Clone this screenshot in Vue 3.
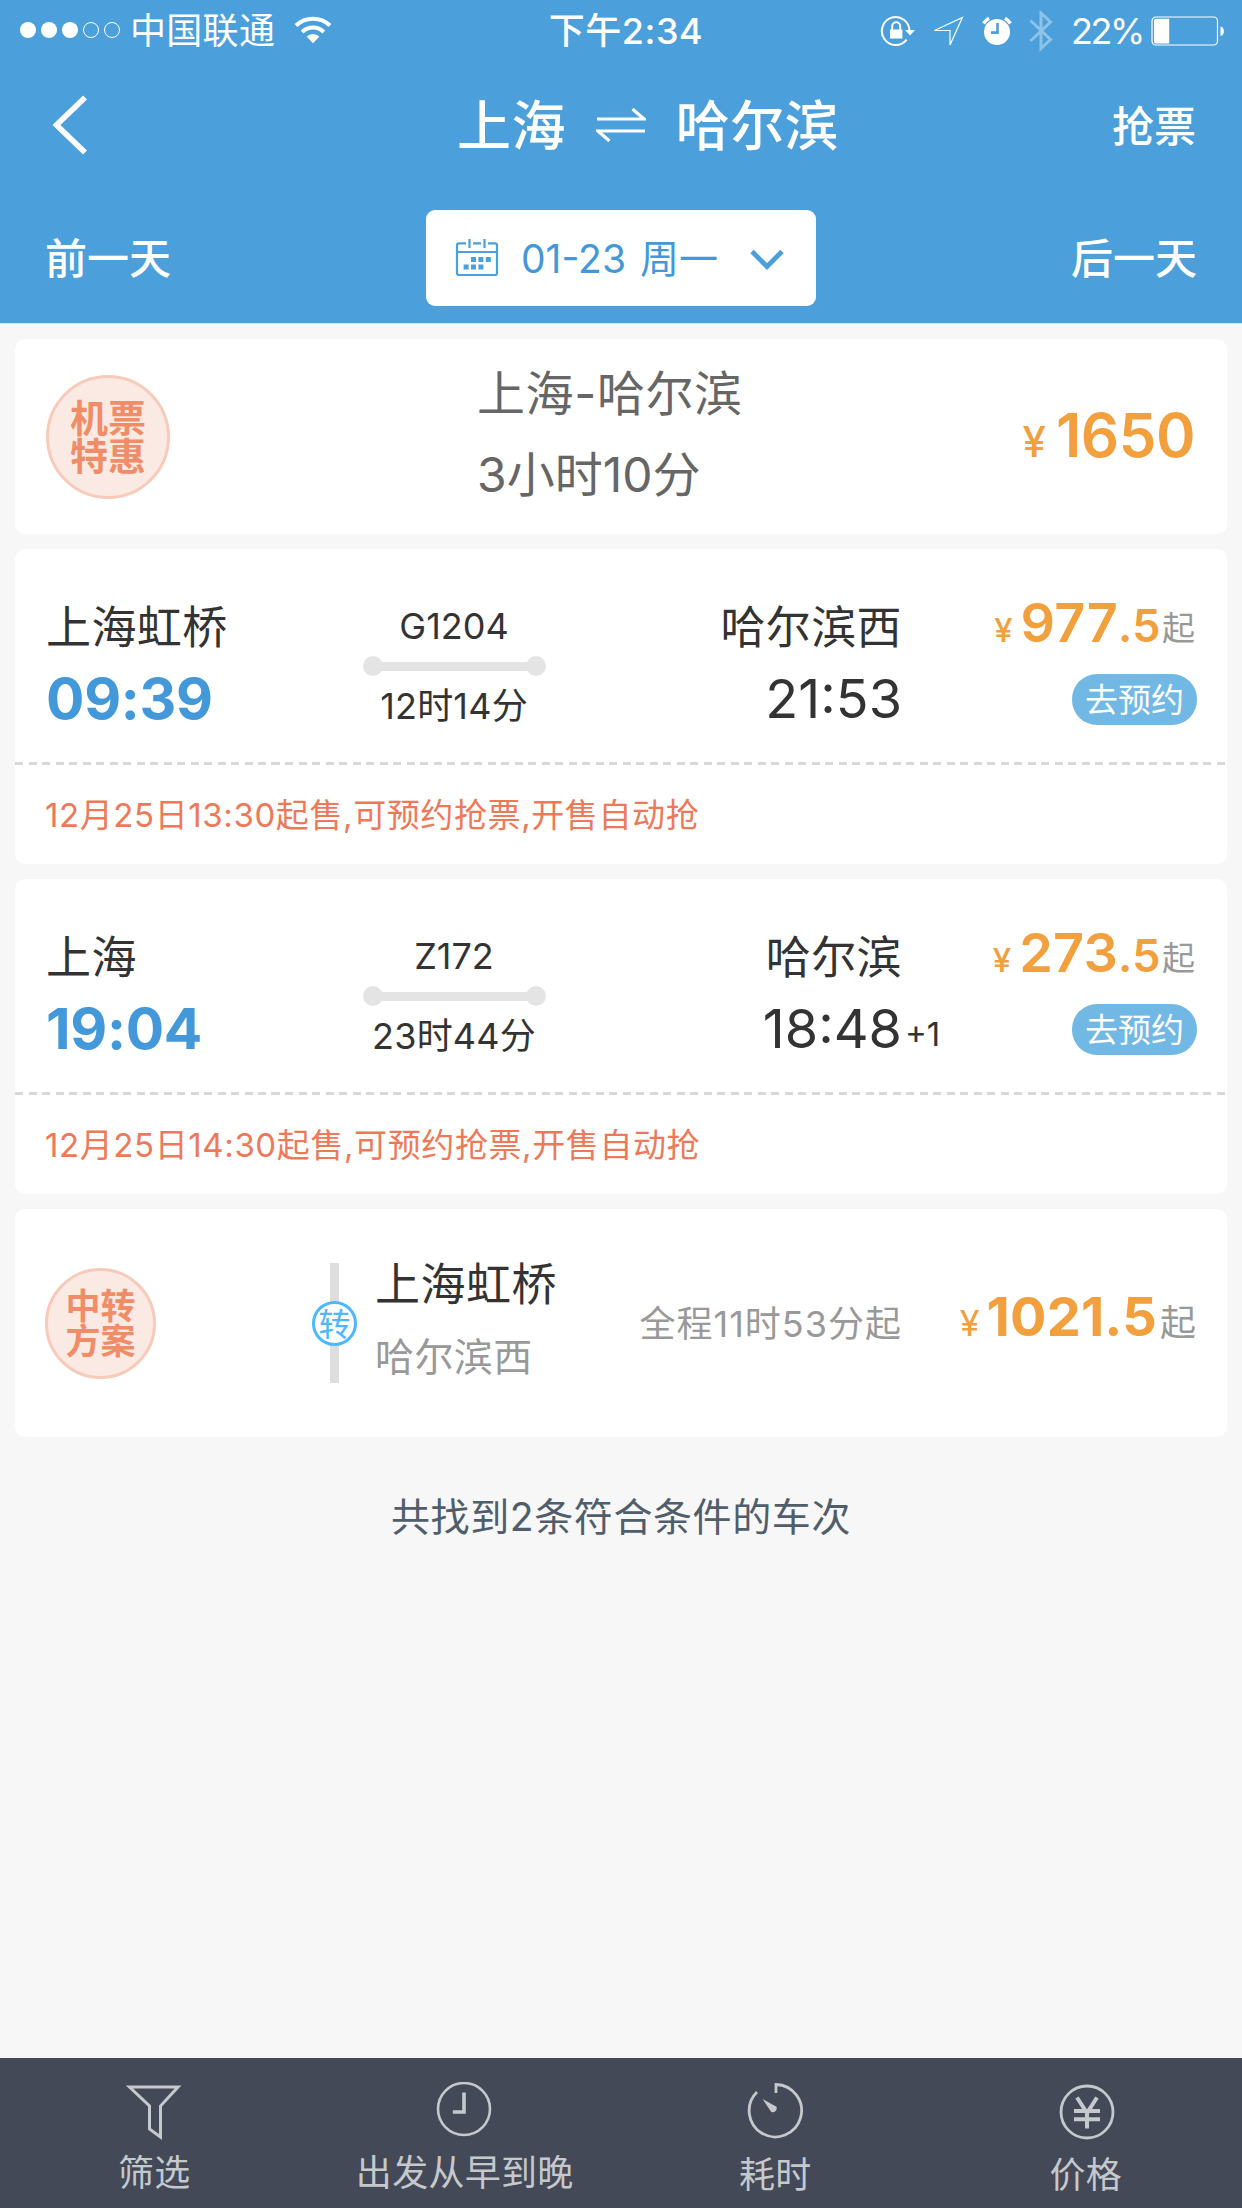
<script setup>
const trains = [
  {
    from: '上海虹桥', depart: '09:39', code: 'G1204', duration: '12时14分',
    to: '哈尔滨西', arrive: '21:53', extra: '', price: '977', cents: '.5',
    notice: '12月25日13:30起售,可预约抢票,开售自动抢',
  },
  {
    from: '上海', depart: '19:04', code: 'Z172', duration: '23时44分',
    to: '哈尔滨', arrive: '18:48', extra: '+1', price: '273', cents: '.5',
    notice: '12月25日14:30起售,可预约抢票,开售自动抢',
  },
]
</script>

<template>
  <div class="page">
    <header class="header">
      <div class="status">
        <div class="status-left">
          <svg class="dots" width="102" height="18" viewBox="0 0 102 18">
            <g fill="#fff"><circle cx="9" cy="9" r="8" /><circle cx="30" cy="9" r="8" /><circle cx="51" cy="9" r="8" /></g>
            <g fill="none" stroke="#fff"><circle cx="72" cy="9" r="7.5" /><circle cx="93" cy="9" r="7.5" /></g>
          </svg>
          <span class="carrier">中国联通</span>
          <svg class="wifi" width="38" height="28" viewBox="0 0 38 28">
            <g fill="none" stroke="#fff" stroke-width="4">
              <path d="M2 9.5A24.5 24.5 0 0 1 36 9.5" />
              <path d="M8.2 16A15.5 15.5 0 0 1 29.8 16" />
            </g>
            <path d="M19 27.2l-6.4-6.6a9 9 0 0 1 12.8 0z" fill="#fff" />
          </svg>
        </div>
        <div class="clock">下午2:34</div>
        <div class="status-right">
          <svg class="lock" width="36" height="32" viewBox="0 0 36 32">
            <path d="M29.5 16A13.8 14 0 1 0 26.6 24.6" fill="none" stroke="#fff" stroke-width="2" />
            <path d="M25 15h10l-5 5.4z" fill="#fff" />
            <rect x="10" y="14.5" width="12.4" height="9" fill="#fff" />
            <path d="M12.2 15v-3.8a4 4 0 0 1 8 0V15" fill="none" stroke="#fff" stroke-width="2" />
          </svg>
          <svg class="locate" width="31" height="31" viewBox="0 0 31 31">
            <path d="M1.5 14.5L29.4 1.4 17 29V14.5z" fill="none" stroke="#fff" stroke-width="1.2" />
          </svg>
          <svg class="alarm" width="30" height="30" viewBox="0 0 30 30">
            <circle cx="15" cy="16" r="13" fill="#fff" />
            <path d="M1.6 7.5A15 15 0 0 1 7 2.3M28.4 7.5A15 15 0 0 0 23 2.3" stroke="#fff" stroke-width="3.4" fill="none" />
            <path d="M15.5 7v9.6H9" stroke="#4b9fda" stroke-width="2.6" fill="none" />
          </svg>
          <svg class="bluetooth" width="24" height="42" viewBox="0 0 24 42">
            <path d="M1.5 10.5L21.5 29.5 12 38.5V3L21.5 12 1.5 31" fill="none" stroke="#8cc3e8" stroke-width="3" />
          </svg>
          <span class="percent">22%</span>
          <svg class="battery" width="75" height="30" viewBox="0 0 75 30">
            <rect x="1" y="1" width="65.5" height="28" rx="4" fill="none" stroke="#fff" stroke-width="1.2" />
            <path d="M5 2.8h13.2v24.6H5a2 2 0 0 1-2-2V4.8a2 2 0 0 1 2-2z" fill="#fff" />
            <path d="M69.5 10.5c4.5 0 4.5 9.5 0 9.5z" fill="#fff" />
          </svg>
        </div>
      </div>

      <div class="nav">
        <svg class="back" width="36" height="60" viewBox="0 0 36 60">
          <path d="M33 2.5L4.5 30 33 57.5" fill="none" stroke="#fff" stroke-width="5.6" />
        </svg>
        <div class="title">
          <span>上海</span>
          <svg width="50" height="34" viewBox="0 0 50 34">
            <path d="M1 11h47L36.5 1M49 23H2l11.5 10" fill="none" stroke="#fff" stroke-width="3.2" />
          </svg>
          <span>哈尔滨</span>
        </div>
        <span class="grab">抢票</span>
      </div>

      <div class="dates">
        <span class="day">前一天</span>
        <div class="picker">
          <svg class="calendar" width="44" height="40" viewBox="0 0 44 40">
            <g fill="none" stroke="#4b9fda" stroke-width="2.2">
              <path d="M11 5.3H4a2 2 0 0 0-2 2V35a2 2 0 0 0 2 2h36a2 2 0 0 0 2-2V7.3a2 2 0 0 0-2-2h-7M18 5.3h8M2 14h40" />
              <path d="M14.5 1v9M29.5 1v9" />
            </g>
            <path d="M16 19h5v5h-5zM23.4 19h5v5h-5zM30.8 19h5v5h-5zM8.6 26.5h5v5h-5zM16 26.5h5v5h-5zM23.4 26.5h5v5h-5z" fill="#4b9fda" />
          </svg>
          <span class="date">01-23 <span>周一</span></span>
          <svg class="chevron" width="34" height="22" viewBox="0 0 34 22">
            <path d="M2 2.5L17 17.5 32 2.5" fill="none" stroke="#4b9fda" stroke-width="4.8" />
          </svg>
        </div>
        <span class="day">后一天</span>
      </div>
    </header>

    <main class="list">
      <section class="card flight">
        <div class="badge"><div>机票</div><div>特惠</div></div>
        <div class="flight-info">
          <div class="flight-route">上海-哈尔滨</div>
          <div>3小时10分</div>
        </div>
        <div class="flight-price"><span class="yen">¥</span><span class="num">1650</span></div>
      </section>

      <section v-for="t in trains" :key="t.code" class="card train">
        <div class="train-main">
          <div class="depart">
            <div class="station">{{ t.from }}</div>
            <div class="time">{{ t.depart }}</div>
          </div>
          <div class="middle">
            <div class="code">{{ t.code }}</div>
            <div class="track"></div>
            <div class="duration">{{ t.duration }}</div>
          </div>
          <div class="arrive">
            <div class="station">{{ t.to }}</div>
            <div class="time">{{ t.arrive }}<span v-if="t.extra" class="extra">{{ t.extra }}</span></div>
          </div>
          <div class="fare">
            <div class="price"><span class="yen">¥</span><span class="num">{{ t.price }}</span><span class="cents">{{ t.cents }}</span><span class="from">起</span></div>
            <div class="book">去预约</div>
          </div>
        </div>
        <div class="dash"></div>
        <div class="notice">{{ t.notice }}</div>
      </section>

      <section class="card transfer">
        <div class="badge small"><div>中转</div><div>方案</div></div>
        <div class="via"><span>转</span></div>
        <div class="route">
          <div class="route-from">上海虹桥</div>
          <div class="route-to">哈尔滨西</div>
        </div>
        <div class="total">全程11时53分起</div>
        <div class="transfer-price"><span class="yen">¥</span><span class="num">1021.5</span><span class="from">起</span></div>
      </section>

      <p class="summary">共找到2条符合条件的车次</p>
    </main>

    <nav class="tabs">
      <div class="tab">
        <svg width="58" height="58" viewBox="0 0 58 58">
          <path d="M4.5 5H53L35.500 24V55L24.500 47V24z" fill="none" stroke="#c5c8cc" stroke-width="3" />
        </svg>
        <span>筛选</span>
      </div>
      <div class="tab">
        <svg width="58" height="58" viewBox="0 0 58 58">
          <circle cx="28" cy="27" r="26" fill="none" stroke="#c5c8cc" stroke-width="2.600" />
          <path d="M28 10.500V30H16.800" fill="none" stroke="#c5c8cc" stroke-width="3.600" />
        </svg>
        <span>出发从早到晚</span>
      </div>
      <div class="tab low">
        <svg width="58" height="58" viewBox="0 0 58 58">
          <path d="M30 11V2.500A26.200 26.200 0 1 1 11 10" fill="none" stroke="#c5c8cc" stroke-width="2.800" />
          <path d="M16.500 17l14 7.800a4 4 0 0 1-5.200 5.200z" fill="#c5c8cc" />
        </svg>
        <span>耗时</span>
      </div>
      <div class="tab low">
        <svg width="58" height="58" viewBox="0 0 58 58">
          <circle cx="30" cy="30" r="26" fill="none" stroke="#c5c8cc" stroke-width="2.800" />
          <path d="M20 15.500L30 31 40 15.500M30 30V46.500M17 29H43M17 37.300H43" fill="none" stroke="#c5c8cc" stroke-width="4" />
        </svg>
        <span>价格</span>
      </div>
    </nav>
  </div>
</template>

<style>
body {
  background: #f7f7f7;
}
</style>

<style scoped>
.page {
  width: 1242px;
  height: 2208px;
  display: flex;
  flex-direction: column;
  overflow: hidden;
  background: #f7f7f7;
  color: #333;
  font-family: Inter, "Noto Sans CJK SC", sans-serif;
  white-space: nowrap;
}
svg {
  display: block;
  flex: none;
}
.header {
  box-sizing: border-box;
  height: 324px;
  background: #4b9fda;
  border-bottom: 1px solid #dce3e7;
  color: #fff;
}
.status {
  display: grid;
  grid-template-columns: 1fr auto 1fr;
  align-items: center;
  height: 62px;
  padding: 0 16px 0 19px;
  font-size: 36px;
  line-height: 62px;
}
.status-left,
.status-right {
  display: flex;
  align-items: center;
  height: 62px;
}
.status-right {
  justify-content: flex-end;
}
.dots {
  margin-top: -2px;
}
.carrier {
  margin-left: 9px;
  letter-spacing: 0.3px;
}
.wifi {
  margin: -3px 0 0 19px;
}
.clock {
  padding-left: 7px;
  font-weight: 500;
  letter-spacing: 0.5px;
}
.locate {
  margin-left: 17px;
}
.alarm {
  margin-left: 18px;
}
.bluetooth {
  margin-left: 17px;
}
.percent {
  margin-left: 18px;
  width: 71px;
  letter-spacing: -2.4px;
}
.battery {
  margin-left: 9px;
}
.nav {
  display: grid;
  grid-template-columns: 1fr auto 1fr;
  align-items: center;
  height: 126px;
  padding: 0 46px 0 52px;
  font-weight: 500;
}
.title {
  display: flex;
  align-items: center;
  gap: 30px;
  padding-left: 48px;
  font-size: 54px;
}
.title span {
  margin-top: -5px;
  letter-spacing: 0.4px;
}
.grab {
  justify-self: end;
  margin-top: -3px;
  font-size: 42px;
}
.dates {
  display: flex;
  justify-content: space-between;
  padding: 22px 45px 0 45px;
  line-height: 96px;
}
.day {
  padding-top: 1px;
  font-size: 42px;
  font-weight: 500;
}
.picker {
  display: flex;
  align-items: center;
  box-sizing: border-box;
  width: 390px;
  height: 96px;
  padding: 0 32px 0 29px;
  border-radius: 9px;
  background: #fff;
  color: #4398d9;
}
.date {
  margin: 1px 0 0 22px;
  font-size: 39px;
}
.date span {
  margin-left: 3px;
}
.chevron {
  margin: 4px 0 0 auto;
}
.list {
  display: flex;
  flex-direction: column;
  gap: 15px;
  flex: 1;
  padding: 15px 15px 0;
}
.card {
  border-radius: 10px;
  background: #fff;
}
.badge {
  box-sizing: border-box;
  width: 124px;
  height: 124px;
  padding-top: 21px;
  border: 3px solid #f7cab9;
  border-radius: 50%;
  background: #fbe9e3;
  color: #f08d68;
  font-size: 38px;
  font-weight: 700;
  line-height: 38px;
  text-align: center;
}
.badge.small {
  width: 111px;
  height: 111px;
  padding-top: 18px;
  font-size: 35px;
  line-height: 35px;
}
.flight {
  display: flex;
  align-items: center;
  height: 195px;
  padding: 0 32px 0 31px;
}
.flight-info {
  margin: -6px 0 0 307px;
  color: #666;
  font-size: 48px;
  line-height: 81px;
}
.flight-route {
  letter-spacing: 0.6px;
}
.flight-price {
  margin: -4px 0 0 auto;
  color: #f29f3d;
  font-weight: 600;
}
.flight-price .yen {
  margin-right: 10px;
  font-size: 42px;
  font-weight: 500;
}
.flight-price .num {
  font-size: 60px;
  letter-spacing: -0.5px;
}
.train-main {
  display: grid;
  grid-template-columns: 305px 206px 345px 1fr;
  height: 213px;
  padding: 0 30px 0 31px;
}
.depart,
.arrive {
  padding-top: 49px;
}
.station {
  font-size: 45px;
  line-height: 60px;
  letter-spacing: 0.4px;
}
.depart .time {
  color: #4398d9;
  font-size: 57px;
  font-weight: 700;
  letter-spacing: -0.3px;
  line-height: 82px;
}
.arrive {
  text-align: right;
}
.arrive .time {
  position: relative;
  font-size: 54px;
  line-height: 82px;
}
.extra {
  position: absolute;
  left: 100%;
  top: 5px;
  margin-left: 3px;
  font-size: 33px;
}
.middle {
  padding-top: 55px;
  text-align: center;
  font-size: 36px;
  line-height: 44px;
}
.duration {
  letter-spacing: 0.2px;
}
.track {
  display: flex;
  align-items: center;
  justify-content: space-between;
  width: 183px;
  height: 20px;
  margin: 8px auto;
  background: linear-gradient(#e4e4e4, #e4e4e4) center / 165px 9px no-repeat;
}
.track::before,
.track::after {
  content: "";
  width: 20px;
  height: 20px;
  border-radius: 50%;
  background: #e4e4e4;
}
.fare {
  display: flex;
  flex-direction: column;
  align-items: flex-end;
  padding-top: 44px;
}
.price {
  padding-right: 2px;
  color: #f29f3d;
  font-size: 54px;
  font-weight: 600;
  line-height: 60px;
}
.price span {
  line-height: 1;
}
.price .yen {
  margin-right: 8px;
  font-size: 33px;
  font-weight: 500;
}
.price .num {
  letter-spacing: 0.2px;
}
.price .cents {
  font-size: 45px;
  letter-spacing: 0.4px;
}
.price .from,
.transfer-price .from {
  position: relative;
  top: -2px;
  margin-left: 1px;
  color: #999;
  font-size: 33px;
  font-weight: 400;
}
.book {
  width: 125px;
  height: 51px;
  margin-top: 21px;
  border-radius: 25px;
  background: #71b8e5;
  color: #fff;
  font-size: 33px;
  line-height: 52px;
  text-align: center;
}
.dash {
  height: 3px;
  background: repeating-linear-gradient(90deg, #d8d8d8 0 8px, transparent 8px 13.5px);
}
.notice {
  height: 99px;
  padding-left: 30px;
  color: #ee7959;
  font-size: 33px;
  letter-spacing: 0.6px;
  line-height: 101px;
}
.transfer {
  display: flex;
  align-items: center;
  height: 228px;
  padding: 0 31px 0 30px;
}
.via {
  display: flex;
  align-items: center;
  width: 45px;
  height: 120px;
  margin-left: 156px;
  background: linear-gradient(#dedede, #dedede) center / 9px 100% no-repeat;
}
.via span {
  box-sizing: border-box;
  width: 45px;
  height: 45px;
  border: 3px solid #4db8ff;
  border-radius: 50%;
  background: #fff;
  color: #4db8ff;
  font-size: 32px;
  line-height: 41px;
  text-align: center;
}
.route {
  margin: -4px 0 0 18px;
}
.route-from {
  font-size: 45px;
  letter-spacing: 0.5px;
  line-height: 72px;
}
.route-to {
  color: #999;
  font-size: 39px;
  letter-spacing: 0.4px;
  line-height: 72px;
}
.total {
  margin: -5px 0 0 auto;
  color: #999;
  font-size: 36px;
  letter-spacing: 1px;
}
.transfer-price {
  width: 294px;
  margin-top: -13px;
  color: #f29f3d;
  text-align: right;
}
.transfer-price .yen {
  margin-right: 7px;
  font-size: 36px;
}
.transfer-price .num {
  font-size: 54px;
  font-weight: 700;
  letter-spacing: 0.2px;
}
.transfer-price .from {
  top: 0;
  margin-left: 3px;
  font-size: 36px;
}
.summary {
  margin: 35px 0 0;
  color: #505d6b;
  font-size: 39px;
  letter-spacing: 0.6px;
  line-height: 60px;
  text-align: center;
}
.tabs {
  display: flex;
  height: 150px;
  margin-left: -1px;
  padding-right: 1px;
  background: #434956;
  color: #c5c8cc;
  font-size: 36px;
}
.tab {
  display: flex;
  flex: 1;
  flex-direction: column;
  align-items: center;
  padding-top: 24px;
  letter-spacing: 0.3px;
  line-height: 66px;
}
.tab.low span {
  padding-top: 2px;
}
</style>
